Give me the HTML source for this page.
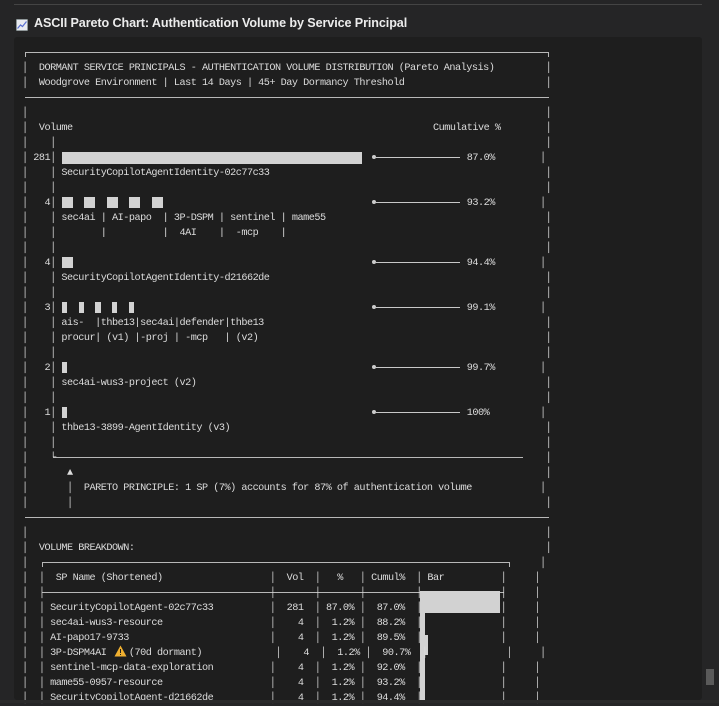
<!DOCTYPE html>
<html><head><meta charset="utf-8"><style>
*{margin:0;padding:0;box-sizing:border-box}
body{width:719px;height:703px;background:#252526;position:relative;overflow:hidden;font-family:"Liberation Mono",monospace;color:#dcdcdc}
.blk{position:absolute;left:14px;top:37px;width:688px;height:663px;background:#1e1e1e;border-radius:3px}
.title{position:absolute;left:34px;top:16px;font-family:"Liberation Sans",sans-serif;font-weight:bold;font-size:12.6px;color:#ececec;white-space:nowrap;letter-spacing:-0.1px}
#c{position:absolute;left:22px;top:45.5px;font-size:10.2px;letter-spacing:-0.49px;line-height:15px}
.l{position:absolute;left:0;height:15px;white-space:pre;width:560px}
.l b{position:absolute;top:0;font-weight:normal;white-space:pre}
.h{position:absolute;background:#b8b8b8;height:1px}
.bar{position:absolute;background:#d2d2d2}
.dot{position:absolute;width:4px;height:4px;border-radius:50%;background:#ccc}
.ln{position:absolute;height:1px;background:#c8c8c8}
</style></head><body>
<div style="position:absolute;left:14px;top:4px;width:688px;height:1px;background:#444"></div>
<div class="blk"></div>
<svg style="position:absolute;left:16px;top:19px" width="12" height="12" viewBox="0 0 12 12"><rect x="0.5" y="0.5" width="11" height="11" fill="#e8eaf0" stroke="#9aa" stroke-width="0.5"/><path d="M1.5 9.5 L4.5 6 L6.5 7.5 L10.5 2.5" stroke="#5a6fd0" stroke-width="1.2" fill="none"/></svg>
<div class="title">ASCII Pareto Chart: Authentication Volume by Service Principal</div>

<div style="position:absolute;left:24.5px;top:52px;width:524px;height:5px;border:1px solid #b8b8b8;border-bottom:none"></div>
<div class="h" style="left:24.5px;top:97px;width:524px"></div>
<div class="h" style="left:53px;top:457px;width:470px"></div>
<div class="h" style="left:24.5px;top:517px;width:524px"></div>
<div style="position:absolute;left:41.5px;top:562px;width:468px;height:5px;border:1px solid #b8b8b8;border-bottom:none"></div>
<div class="h" style="left:41.5px;top:592px;width:462px"></div>

<div class="bar" style="left:61.8px;top:152px;width:300px;height:12px"></div>
<div class="bar" style="left:61.6px;top:197px;width:11.2px;height:11px"></div>
<div class="bar" style="left:84.1px;top:197px;width:11.2px;height:11px"></div>
<div class="bar" style="left:106.6px;top:197px;width:11.2px;height:11px"></div>
<div class="bar" style="left:129.1px;top:197px;width:11.2px;height:11px"></div>
<div class="bar" style="left:151.6px;top:197px;width:11.2px;height:11px"></div>
<div class="bar" style="left:61.6px;top:257px;width:11.2px;height:11px"></div>
<div class="bar" style="left:61.6px;top:302px;width:5.2px;height:11px"></div>
<div class="bar" style="left:78.5px;top:302px;width:5.2px;height:11px"></div>
<div class="bar" style="left:95.4px;top:302px;width:5.2px;height:11px"></div>
<div class="bar" style="left:112.3px;top:302px;width:5.2px;height:11px"></div>
<div class="bar" style="left:129.2px;top:302px;width:5.2px;height:11px"></div>
<div class="bar" style="left:61.6px;top:362px;width:5.2px;height:11px"></div>
<div class="bar" style="left:61.6px;top:407px;width:5.2px;height:11px"></div>
<div class="dot" style="left:372px;top:155px"></div><div class="ln" style="left:376px;top:157px;width:84px"></div>
<div class="dot" style="left:372px;top:200px"></div><div class="ln" style="left:376px;top:202px;width:84px"></div>
<div class="dot" style="left:372px;top:260px"></div><div class="ln" style="left:376px;top:262px;width:84px"></div>
<div class="dot" style="left:372px;top:305px"></div><div class="ln" style="left:376px;top:307px;width:84px"></div>
<div class="dot" style="left:372px;top:365px"></div><div class="ln" style="left:376px;top:367px;width:84px"></div>
<div class="dot" style="left:372px;top:410px"></div><div class="ln" style="left:376px;top:412px;width:84px"></div>
<div class="bar" style="left:420px;top:591px;width:80px;height:22px"></div>
<div class="bar" style="left:420px;top:613px;width:5px;height:90px"></div>
<div class="bar" style="left:425px;top:635px;width:3px;height:20px"></div>
<svg style="position:absolute;left:114px;top:645px" width="13" height="12" viewBox="0 0 13 12"><path d="M6.5 0.5 L12.5 11.5 L0.5 11.5 Z" fill="#f0b030"/><rect x="6" y="4" width="1" height="4" fill="#222"/><rect x="6" y="9" width="1" height="1" fill="#222"/></svg>
<div style="position:absolute;left:706px;top:669px;width:8px;height:16px;background:#5a5a5a"></div>

<div id="c">
<div class="l" style="top:15px">│  DORMANT SERVICE PRINCIPALS - AUTHENTICATION VOLUME DISTRIBUTION (Pareto Analysis)<b style="left:523.6px">│</b></div>
<div class="l" style="top:30px">│  Woodgrove Environment | Last 14 Days | 45+ Day Dormancy Threshold<b style="left:523.6px">│</b></div>
<div class="l" style="top:60px">│<b style="left:523.6px">│</b></div>
<div class="l" style="top:75px">│  Volume<b style="left:411px">Cumulative %</b><b style="left:523.6px">│</b></div>
<div class="l" style="top:90px">│    │<b style="left:523.6px">│</b></div>
<div class="l" style="top:105px">│ 281│<b style="left:444.8px">87.0%</b><b style="left:518px">│</b></div>
<div class="l" style="top:120px">│    │ SecurityCopilotAgentIdentity-02c77c33<b style="left:523.6px">│</b></div>
<div class="l" style="top:135px">│    │<b style="left:523.6px">│</b></div>
<div class="l" style="top:150px">│   4│<b style="left:444.8px">93.2%</b><b style="left:518px">│</b></div>
<div class="l" style="top:165px">│    │ sec4ai | AI-papo  | 3P-DSPM | sentinel | mame55<b style="left:523.6px">│</b></div>
<div class="l" style="top:180px">│    │        |          |  4AI    |  -mcp    |<b style="left:523.6px">│</b></div>
<div class="l" style="top:195px">│    │<b style="left:523.6px">│</b></div>
<div class="l" style="top:210px">│   4│<b style="left:444.8px">94.4%</b><b style="left:518px">│</b></div>
<div class="l" style="top:225px">│    │ SecurityCopilotAgentIdentity-d21662de<b style="left:523.6px">│</b></div>
<div class="l" style="top:240px">│    │<b style="left:523.6px">│</b></div>
<div class="l" style="top:255px">│   3│<b style="left:444.8px">99.1%</b><b style="left:518px">│</b></div>
<div class="l" style="top:270px">│    │ ais-  |thbe13|sec4ai|defender|thbe13<b style="left:523.6px">│</b></div>
<div class="l" style="top:285px">│    │ procur| (v1) |-proj | -mcp   | (v2)<b style="left:523.6px">│</b></div>
<div class="l" style="top:300px">│    │<b style="left:523.6px">│</b></div>
<div class="l" style="top:315px">│   2│<b style="left:444.8px">99.7%</b><b style="left:518px">│</b></div>
<div class="l" style="top:330px">│    │ sec4ai-wus3-project (v2)<b style="left:523.6px">│</b></div>
<div class="l" style="top:345px">│    │<b style="left:523.6px">│</b></div>
<div class="l" style="top:360px">│   1│<b style="left:444.8px">100%</b><b style="left:518px">│</b></div>
<div class="l" style="top:375px">│    │ thbe13-3899-AgentIdentity (v3)<b style="left:523.6px">│</b></div>
<div class="l" style="top:390px">│    │<b style="left:523.6px">│</b></div>
<div class="l" style="top:405px">│    └<b style="left:523.6px">│</b></div>
<div class="l" style="top:420px">│       ▲<b style="left:523.6px">│</b></div>
<div class="l" style="top:435px">│       │  PARETO PRINCIPLE: 1 SP (7%) accounts for 87% of authentication volume<b style="left:518px">│</b></div>
<div class="l" style="top:450px">│       │<b style="left:523.6px">│</b></div>
<div class="l" style="top:480px">│<b style="left:523.6px">│</b></div>
<div class="l" style="top:495px">│  VOLUME BREAKDOWN:<b style="left:523.6px">│</b></div>
<div class="l" style="top:510px">│<b style="left:518px">│</b></div>
<div class="l" style="top:525px">│  │  SP Name (Shortened)<b style="left:247.7px">│</b><b style="left:264.6px">Vol</b><b style="left:292.8px">│</b><b style="left:315.3px">%</b><b style="left:337.8px">│</b><b style="left:349.1px">Cumul%</b><b style="left:394.1px">│</b><b style="left:405.4px">Bar</b><b style="left:478.6px">│</b><b style="left:512.3px">│</b></div>
<div class="l" style="top:540px">│  │<b style="left:247.7px">│</b><b style="left:292.8px">│</b><b style="left:337.8px">│</b><b style="left:394.1px">│</b><b style="left:478.6px">│</b><b style="left:512.3px">│</b></div>
<div class="l" style="top:555px">│  │ SecurityCopilotAgent-02c77c33<b style="left:247.7px">│</b><b style="left:264.6px">281</b><b style="left:292.8px">│</b><b style="left:304px">87.0%</b><b style="left:337.8px">│</b><b style="left:354.7px">87.0%</b><b style="left:394.1px">│</b><b style="left:478.6px">│</b><b style="left:512.3px">│</b></div>
<div class="l" style="top:570px">│  │ sec4ai-wus3-resource<b style="left:247.7px">│</b><b style="left:264.6px">  4</b><b style="left:292.8px">│</b><b style="left:304px"> 1.2%</b><b style="left:337.8px">│</b><b style="left:354.7px">88.2%</b><b style="left:394.1px">│</b><b style="left:478.6px">│</b><b style="left:512.3px">│</b></div>
<div class="l" style="top:585px">│  │ AI-papo17-9733<b style="left:247.7px">│</b><b style="left:264.6px">  4</b><b style="left:292.8px">│</b><b style="left:304px"> 1.2%</b><b style="left:337.8px">│</b><b style="left:354.7px">89.5%</b><b style="left:394.1px">│</b><b style="left:478.6px">│</b><b style="left:512.3px">│</b></div>
<div class="l" style="top:600px">│  │ 3P-DSPM4AI    (70d dormant)<b style="left:253.4px">│</b><b style="left:270.2px">  4</b><b style="left:298.4px">│</b><b style="left:309.7px"> 1.2%</b><b style="left:343.4px">│</b><b style="left:360.3px">90.7%</b><b style="left:399.7px">│</b><b style="left:484.2px">│</b><b style="left:518px">│</b></div>
<div class="l" style="top:615px">│  │ sentinel-mcp-data-exploration<b style="left:247.7px">│</b><b style="left:264.6px">  4</b><b style="left:292.8px">│</b><b style="left:304px"> 1.2%</b><b style="left:337.8px">│</b><b style="left:354.7px">92.0%</b><b style="left:394.1px">│</b><b style="left:478.6px">│</b><b style="left:512.3px">│</b></div>
<div class="l" style="top:630px">│  │ mame55-0957-resource<b style="left:247.7px">│</b><b style="left:264.6px">  4</b><b style="left:292.8px">│</b><b style="left:304px"> 1.2%</b><b style="left:337.8px">│</b><b style="left:354.7px">93.2%</b><b style="left:394.1px">│</b><b style="left:478.6px">│</b><b style="left:512.3px">│</b></div>
<div class="l" style="top:645px">│  │ SecurityCopilotAgent-d21662de<b style="left:247.7px">│</b><b style="left:264.6px">  4</b><b style="left:292.8px">│</b><b style="left:304px"> 1.2%</b><b style="left:337.8px">│</b><b style="left:354.7px">94.4%</b><b style="left:394.1px">│</b><b style="left:478.6px">│</b><b style="left:512.3px">│</b></div>
</div>
<div style="position:absolute;left:0;top:700px;width:719px;height:3px;background:#2a2a2a"></div>
</body></html>
